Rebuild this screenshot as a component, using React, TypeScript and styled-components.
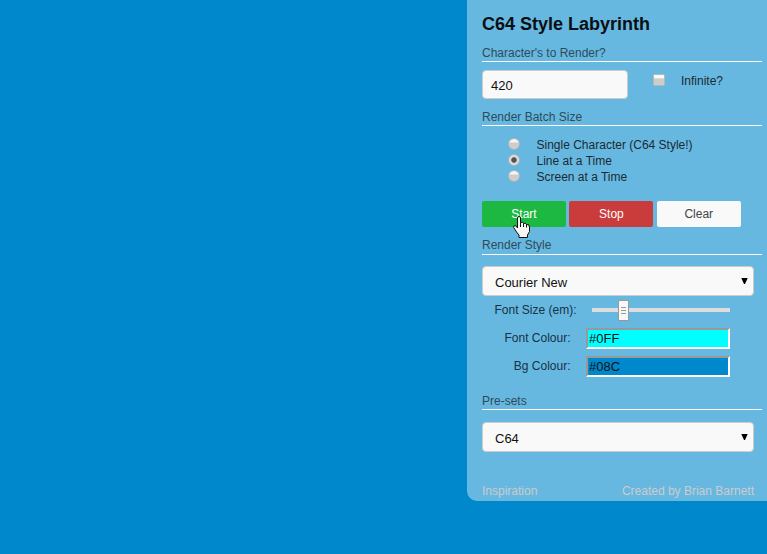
import React from "react";
import styled, { createGlobalStyle } from "styled-components";

const GlobalStyle = createGlobalStyle`
  *, *::before, *::after { box-sizing: border-box; }
  html, body { margin: 0; height: 100%; overflow: hidden; background: #0088cc; }
  body { font-family: "Liberation Sans", Arial, sans-serif; font-size: 12px; color: #1c2a33; }
`;

const Page = styled.main`
  display: flex;
  justify-content: flex-end;
  height: 554px;
`;

const Panel = styled.form`
  display: flex;
  flex-direction: column;
  width: 300px;
  height: 501px;
  padding: 12px 5px 0 15px;
  border-bottom-left-radius: 10px;
  background: #66b8e0;
`;

const Title = styled.h1`
  margin: 0;
  height: 32px;
  font-size: 18px;
  line-height: 24px;
  color: #0a0f12;
  white-space: nowrap;
`;

const Legend = styled.h2<{ $top?: number; $line?: number }>`
  flex: none;
  margin: ${(p) => p.$top ?? 0}px 0 0;
  height: 18px;
  border-bottom: 1px solid #fff;
  font-size: 12px;
  font-weight: normal;
  line-height: ${(p) => p.$line ?? 18}px;
  color: #2e4b5a;
`;

const CountRow = styled.div`
  display: flex;
  height: 29px;
  margin-top: 8px;
`;

const NumberInput = styled.input`
  width: 146px;
  height: 29px;
  padding: 2px 8px 0;
  border: 1px solid #ccc;
  border-radius: 4px;
  outline: none;
  background: #f9f9f9;
  font: 13px "Liberation Sans", Arial, sans-serif;
  color: #111;
`;

const CheckLabel = styled.label`
  display: flex;
  align-items: flex-start;
  gap: 16px;
  margin-left: 25px;
  padding-top: 4px;
  line-height: 14px;
`;

const CheckBox = styled.span`
  width: 12px;
  height: 12px;
  border: 1px solid #b5b8ba;
  border-radius: 1px;
  background: linear-gradient(#f8f8f8 0 25%, #cdcdcd 40%);
`;

const RadioList = styled.div`
  display: flex;
  flex-direction: column;
  margin: 11px 0 0 26px;
`;

const RadioRow = styled.label`
  display: flex;
  align-items: flex-start;
  gap: 16.5px;
  height: 16px;
  line-height: 16px;
`;

const RadioDot = styled.span<{ $checked?: boolean }>`
  width: 12px;
  height: 12px;
  margin-top: 1px;
  border: 1px solid #b0b3b5;
  border-radius: 50%;
  background: ${(p) => (p.$checked
    ? "radial-gradient(circle, #555 0 2.3px, #ddd 3.2px)"
    : "linear-gradient(#f4f4f4 0 25%, #cecece 45%)")};
`;

const Buttons = styled.div`
  display: grid;
  grid-template-columns: 84px 84px 84px;
  column-gap: 3.4px;
  height: 26px;
  margin-top: 16px;
`;

const Button = styled.button<{ $bg: string; $fg?: string }>`
  position: relative;
  padding: 0;
  border: 0;
  border-radius: 2px;
  background: ${(p) => p.$bg};
  color: ${(p) => p.$fg ?? "#fff"};
  font: 12px/26px "Liberation Sans", Arial, sans-serif;
`;

const Pointer = styled.svg`
  position: absolute;
  z-index: 1;
  left: 31px;
  top: 15px;
`;

const SelectBox = styled.div<{ $top: number }>`
  display: flex;
  flex: none;
  align-items: center;
  justify-content: space-between;
  width: 272px;
  height: 30px;
  margin-top: ${(p) => p.$top}px;
  padding: 3px 5px 0 12px;
  border: 1px solid #ccc;
  border-radius: 4px;
  background: #f9f9f9;
  font-size: 13px;
  color: #111;
`;

const Arrow = styled.svg`
  margin-top: -4px;
`;

const Field = styled.div<{ $height: number; $label: number }>`
  display: grid;
  grid-template-columns: ${(p) => p.$label}px auto;
  column-gap: 15px;
  align-items: center;
  height: ${(p) => p.$height}px;
  color: #163244;
`;

const FieldLabel = styled.label`
  padding: 0 0.5px 2px 0;
  text-align: right;
  white-space: nowrap;
`;

const Track = styled.div`
  display: flex;
  align-items: center;
  width: 138px;
  height: 4px;
  margin-bottom: 1px;
  background: #ddd;
`;

const Thumb = styled.div`
  display: flex;
  flex-direction: column;
  align-items: center;
  justify-content: center;
  gap: 2px;
  flex: none;
  width: 11px;
  height: 21px;
  margin-left: 26px;
  border: 1px solid #999;
  background: #f8f8f8;
`;

const Grip = styled.span`
  width: 5px;
  height: 1px;
  background: #999;
`;

const ColourInput = styled.input<{ $bg: string }>`
  width: 144px;
  height: 21px;
  padding: 0 1px;
  border: 2px solid;
  border-color: #999 #fff #fff #999;
  outline: none;
  background: ${(p) => p.$bg};
  font: 13px "Liberation Sans", Arial, sans-serif;
  color: #111;
`;

const Fields = styled.div`
  display: flex;
  flex-direction: column;
  margin-top: 4px;
`;

const Footer = styled.footer`
  display: flex;
  justify-content: space-between;
  width: 272px;
  margin-top: 31px;
  line-height: 16px;
  color: #ccc;
`;

const Hand = () => (
  <Pointer width="18" height="23" viewBox="0 0 18 23">
    <path
      d="M4.500 12V2Q4.500 0.500 6 0.500T7.500 2V6.500Q10 5.500 10.500 7.500Q12.500 6.500 13.500 8.500Q16.500 8 16.500 11V15.500L14.500 19V21.500H6V19L3.500 16L0.700 11.500Q0.500 9.500 2 9.500Q3.300 9.800 4.500 12Z"
      fill="#f6f6f6" stroke="#111" strokeWidth="1"
    />
    <path d="M7.500 6.500V11M10.500 7.500V11M13.500 8.500V11.500" stroke="#111" fill="none" />
  </Pointer>
);

const Select = ({ value, top }: { value: string; top: number }) => (
  <SelectBox $top={top}>
    {value}
    <Arrow width="7" height="6" viewBox="0 0 7 6">
      <path d="M0.300 0H6.700L4 6H3Z" fill="#000" />
    </Arrow>
  </SelectBox>
);

const modes = ["Single Character (C64 Style!)", "Line at a Time", "Screen at a Time"];

export default function App() {
  return (
    <Page>
      <GlobalStyle />
      <Panel>
        <Title>C64 Style Labyrinth</Title>
        <Legend>Character's to Render?</Legend>
        <CountRow>
          <NumberInput defaultValue="420" />
          <CheckLabel><CheckBox />Infinite?</CheckLabel>
        </CountRow>
        <Legend $top={9}>Render Batch Size</Legend>
        <RadioList>
          {modes.map((mode, i) => (
            <RadioRow key={mode}><RadioDot $checked={i === 1} />{mode}</RadioRow>
          ))}
        </RadioList>
        <Buttons>
          <Button type="button" $bg="#1cb841">Start<Hand /></Button>
          <Button type="button" $bg="#ca3c3c">Stop</Button>
          <Button type="button" $bg="#f9f9f9" $fg="#444">Clear</Button>
        </Buttons>
        <Legend $top={10} $line={16}>Render Style</Legend>
        <Select value="Courier New" top={11} />
        <Fields>
          <Field $height={21} $label={95}>
            <FieldLabel>Font Size (em):</FieldLabel>
            <Track><Thumb><Grip /><Grip /><Grip /></Thumb></Track>
          </Field>
          <Field $height={35} $label={89}>
            <FieldLabel>Font Colour:</FieldLabel>
            <ColourInput $bg="#0ff" defaultValue="#0FF" />
          </Field>
          <Field $height={21} $label={89}>
            <FieldLabel>Bg Colour:</FieldLabel>
            <ColourInput $bg="#08c" defaultValue="#08C" />
          </Field>
        </Fields>
        <Legend $top={15}>Pre-sets</Legend>
        <Select value="C64" top={12} />
        <Footer><span>Inspiration</span><span>Created by Brian Barnett</span></Footer>
      </Panel>
    </Page>
  );
}
